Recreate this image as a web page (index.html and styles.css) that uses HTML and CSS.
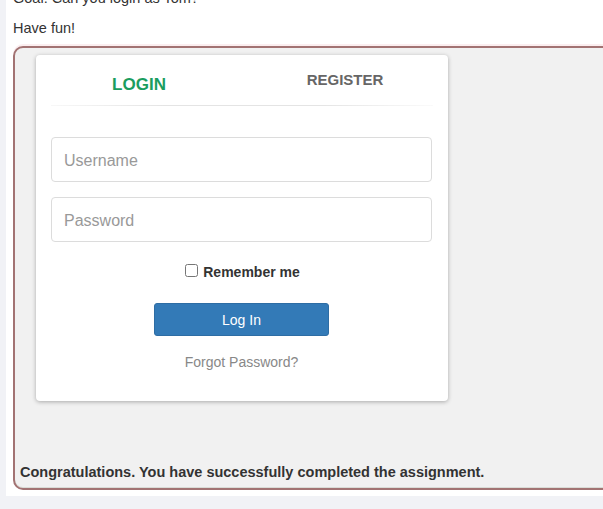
FILE: index.html
```html
<!DOCTYPE html>
<html lang="en">
<head>
    <meta charset="UTF-8">
    <meta name="viewport" content="width=device-width, initial-scale=1.0">
    <title>Login assignment</title>
    <link rel="stylesheet" href="styles.css">
</head>
<body>
<div class="lesson">
    <p class="lesson-text">Goal: Can you login as Tom?</p>
    <p class="lesson-text">Have fun!</p>

    <div class="attack-box">
        <div class="login-card">
            <div class="tabs">
                <div class="tab tab-active">LOGIN</div>
                <div class="tab">REGISTER</div>
            </div>
            <div class="tabs-line"></div>

            <form class="login-form" onsubmit="return false">
                <input type="text" class="form-input" placeholder="Username">
                <input type="password" class="form-input" placeholder="Password">

                <label class="remember">
                    <input type="checkbox" class="remember-box">
                    Remember me
                </label>

                <button type="submit" class="login-button">Log In</button>

                <a class="forgot-link" href="#">Forgot Password?</a>
            </form>
        </div>

        <div class="feedback">Congratulations. You have successfully completed the assignment.</div>
    </div>
</div>
</body>
</html>
```

FILE: styles.css
```css
* {
    margin: 0;
    padding: 0;
    box-sizing: border-box;
}

html, body {
    overflow: hidden;
}

body {
    font-family: 'Liberation Sans', Arial, sans-serif;
    font-size: 14px;
    line-height: 20px;
    color: #333;
    background: #f1f2f6;
    height: 509px;
}

.lesson {
    width: 720px;
    margin: -12px 0 0 6px;
    padding: 0 0 6px 7px;
    background: white;
}

.lesson-text {
    margin-bottom: 10px;
    font-size: 14.5px;
}

.attack-box {
    margin-top: -2px;
    padding: 7px 0 6px 5px;
    background: #f1f1f1;
    border: 2px solid #a27373;
    border-radius: 10px;
    box-shadow: 0 -2px 0 #fbeef0, inset 0 -1px 0 #d9dcd6;
}

.login-card {
    width: 412px;
    height: 346px;
    margin-left: 16px;
    background: white;
    border-radius: 4px;
    box-shadow: 0 1px 4px rgba(0, 0, 0, 0.3);
}

.tabs {
    display: grid;
    grid-template-columns: 1fr 1fr;
    height: 50px;
}

.tab {
    text-align: center;
    font-weight: bold;
    font-size: 15px;
    color: #666;
    padding-top: 15px;
}

.tab-active {
    font-size: 17px;
    color: #1a9d5f;
    padding-top: 20px;
}

.tabs-line {
    height: 1px;
    margin: 0 15px;
    background: linear-gradient(to right, rgba(230, 230, 230, 0.3), #e4e4e4 30%, #e4e4e4 70%, rgba(230, 230, 230, 0.2));
}

.login-form {
    display: flex;
    flex-direction: column;
    align-items: center;
    padding: 31px 16px 0 15px;
}

.form-input {
    width: 100%;
    height: 45px;
    padding: 3px 12px 0;
    border: 1px solid #dcdcdc;
    border-radius: 4px;
    font-family: inherit;
    font-size: 16px;
    color: #333;
    outline: none;
    margin-bottom: 15px;
}

.form-input::placeholder {
    color: #999;
}

.remember {
    display: flex;
    align-items: center;
    gap: 5px;
    margin-top: 5px;
    margin-left: 2px;
    font-weight: bold;
    color: #333;
}

.remember-box {
    width: 13px;
    height: 13px;
    margin: 0;
    position: relative;
    top: -2px;
}

.login-button {
    width: 175px;
    height: 33px;
    margin-top: 21px;
    background: #337ab7;
    border: 1px solid #2e6da4;
    border-radius: 3px;
    color: white;
    font-family: inherit;
    font-size: 14px;
    cursor: pointer;
}

.forgot-link {
    margin-top: 16px;
    color: #888;
    text-decoration: none;
}

.feedback {
    margin-top: 61px;
    font-weight: bold;
    font-size: 14.5px;
}
```
